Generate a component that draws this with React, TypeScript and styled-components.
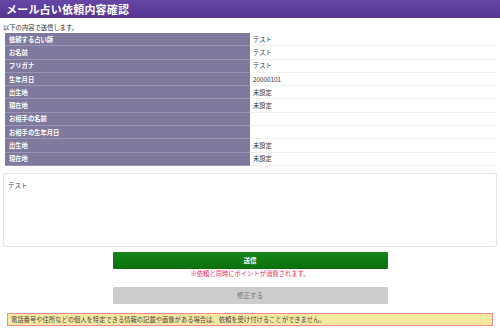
import React from "react";
import styled, { createGlobalStyle } from "styled-components";

const Global = createGlobalStyle`
  html, body { margin: 0; padding: 0; background: #fff; }
  body { font-family: "Noto Sans CJK JP", "Noto Sans", sans-serif; color: #333; }
  * { box-sizing: border-box; }
`;

const Page = styled.div`
  width: 500px;
  height: 332px;
  display: flex;
  flex-direction: column;
`;

const Header = styled.h1`
  margin: 0;
  height: 18px;
  padding: 0 6px;
  display: flex;
  align-items: center;
  background: linear-gradient(180deg, #6747a6 0%, #553592 100%);
  color: #fff;
  font-size: 11px;
  font-weight: 700;
  letter-spacing: 0.2px;
`;

const Lead = styled.p`
  margin: 6px 0 0 3px;
  height: 9px;
  font-size: 6.3px;
  line-height: 8px;
  color: #333;
`;

const Table = styled.div`
  margin: 0 3px 0 5px;
  display: grid;
  grid-template-columns: 245px 1fr;
`;

const Label = styled.div`
  height: 13.3px;
  background: #7e799d;
  border-bottom: 1px solid #9a95b6;
  color: #fff;
  font-size: 6.3px;
  font-weight: 700;
  padding-left: 4px;
  display: flex;
  align-items: center;
`;

const Value = styled.div`
  height: 13.3px;
  border-bottom: 1px solid #f0f0f0;
  color: #333;
  font-size: 6.3px;
  padding-left: 3px;
  display: flex;
  align-items: center;
`;

const Memo = styled.div`
  margin: 7px 3px 0 3px;
  height: 74px;
  border: 1px solid #e6e6e6;
  border-radius: 2px;
  padding: 6px 4px;
  font-size: 6.5px;
  color: #444;
`;

const Actions = styled.div`
  margin-top: 5px;
  display: flex;
  flex-direction: column;
  align-items: center;
`;

const Button = styled.button<{ $primary?: boolean }>`
  width: 275px;
  height: 17px;
  border: none;
  border-radius: 1px;
  font-family: inherit;
  font-size: 6.5px;
  font-weight: ${(p) => (p.$primary ? 700 : 400)};
  color: ${(p) => (p.$primary ? "#fff" : "#777")};
  background: ${(p) =>
    p.$primary ? "linear-gradient(180deg, #16861a 0%, #0a6f0c 100%)" : "#cccccc"};
  display: flex;
  align-items: center;
  justify-content: center;
  padding: 0;
`;

const Note = styled.p`
  margin: 1px 0 10px;
  color: #e8305e;
  font-size: 6.3px;
  line-height: 7px;
`;

const Warning = styled.div`
  margin: 9px 7px 0 7px;
  height: 13px;
  background: #f9e8a0;
  border: 1px solid #f08c8c;
  font-size: 6.3px;
  color: #444;
  padding-left: 3px;
  display: flex;
  align-items: center;
`;

const rows: [string, string][] = [
  ["依頼する占い師", "テスト"],
  ["お名前", "テスト"],
  ["フリガナ", "テスト"],
  ["生年月日", "20000101"],
  ["出生地", "未設定"],
  ["現在地", "未設定"],
  ["お相手の名前", ""],
  ["お相手の生年月日", ""],
  ["出生地", "未設定"],
  ["現在地", "未設定"],
];

export default function App() {
  return (
    <Page>
      <Global />
      <Header>メール占い依頼内容確認</Header>
      <Lead>以下の内容で送信します。</Lead>
      <Table>
        {rows.map(([k, v], i) => (
          <React.Fragment key={i}>
            <Label>{k}</Label>
            <Value>{v}</Value>
          </React.Fragment>
        ))}
      </Table>
      <Memo>テスト</Memo>
      <Actions>
        <Button $primary>送信</Button>
        <Note>※依頼と同時にポイントが消費されます。</Note>
        <Button>修正する</Button>
      </Actions>
      <Warning>電話番号や住所などの個人を特定できる情報の記載や画像がある場合は、依頼を受け付けることができません。</Warning>
    </Page>
  );
}
